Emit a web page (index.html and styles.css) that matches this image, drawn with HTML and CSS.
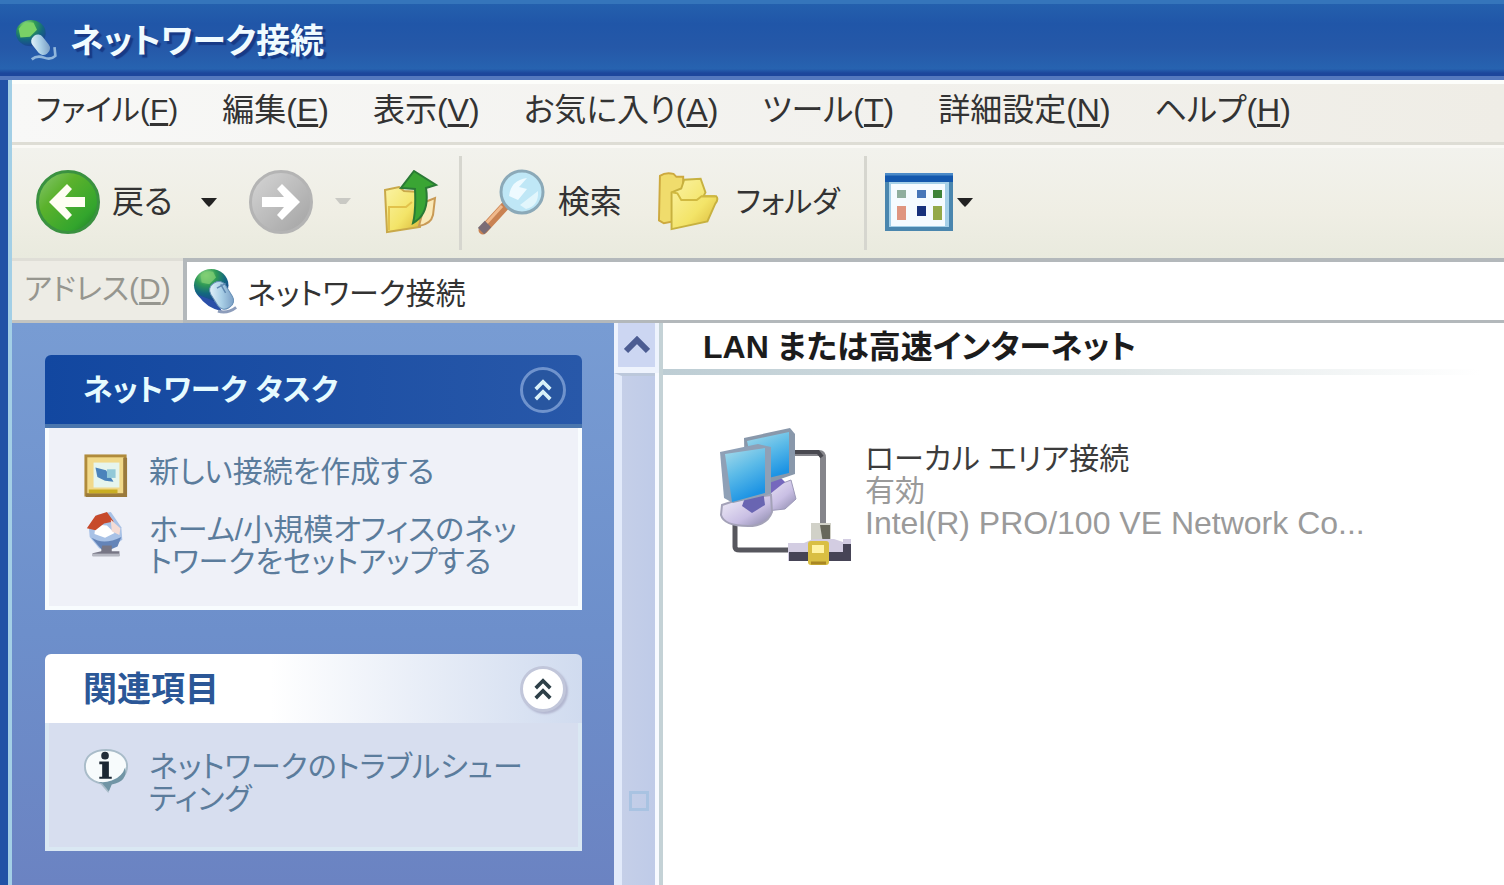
FILE: index.html
```html
<!DOCTYPE html>
<html lang="ja">
<head>
<meta charset="utf-8">
<meta name="viewport" content="width=device-width, initial-scale=1">
<title>ネットワーク接続</title>
<link rel="stylesheet" href="styles.css">
</head>
<body>
<svg class="defs" aria-hidden="true">
  <defs>
    <radialGradient id="globe" cx="35%" cy="20%" r="85%">
      <stop offset="0" stop-color="#9be08a"/><stop offset=".35" stop-color="#2f9a55"/><stop offset=".65" stop-color="#14687f"/><stop offset="1" stop-color="#1c3f96"/>
    </radialGradient>
    <linearGradient id="mouse" x1="0" y1="0" x2="1" y2="1">
      <stop offset="0" stop-color="#eef8fc"/><stop offset=".5" stop-color="#a9cfe6"/><stop offset="1" stop-color="#6f93bd"/>
    </linearGradient>
    <linearGradient id="green" x1="0" y1="0" x2="1" y2="1">
      <stop offset="0" stop-color="#8bc878"/><stop offset=".35" stop-color="#5bb22c"/><stop offset=".75" stop-color="#33a52d"/><stop offset="1" stop-color="#1d7428"/>
    </linearGradient>
    <linearGradient id="grey" x1="0" y1="0" x2="1" y2="1">
      <stop offset="0" stop-color="#d6d6d6"/><stop offset="1" stop-color="#a2a2a2"/>
    </linearGradient>
    <linearGradient id="folder" x1="0" y1="0" x2="1" y2="1">
      <stop offset="0" stop-color="#fbf3a4"/><stop offset=".6" stop-color="#f3e468"/><stop offset="1" stop-color="#d9b738"/>
    </linearGradient>
    <linearGradient id="screen" x1="0" y1="0" x2=".4" y2="1">
      <stop offset="0" stop-color="#a9dcea"/><stop offset=".5" stop-color="#5cbbe8"/><stop offset="1" stop-color="#1c93e4"/>
    </linearGradient>
    <linearGradient id="base" x1="0" y1="0" x2="1" y2="1">
      <stop offset="0" stop-color="#f4f2fa"/><stop offset=".6" stop-color="#c9bfe4"/><stop offset="1" stop-color="#8583a5"/>
    </linearGradient>
    <symbol id="net" viewBox="0 0 48 48">
      <ellipse cx="19" cy="18" rx="18" ry="17" fill="url(#globe)"/>
      <path d="M8 7q6-5 13-3l3 6-7 7-8-2z" fill="#7ccc70" opacity=".8"/>
      <path d="M5 28q9 14 25 17l-4-9z" fill="#2a4fa8"/>
      <rect x="21" y="14" width="18" height="30" rx="8" transform="rotate(-32 29 29)" fill="url(#mouse)" stroke="#668fb6"/>
      <path d="M25 21l9-5M29 17l5 9" stroke="#5f88b0" stroke-width="1.5" fill="none"/>
      <path d="M26 45q10 3 19-4" stroke="#8d9dbb" stroke-width="3" fill="none"/>
    </symbol>
    <symbol id="chevrons" viewBox="0 0 22 26">
      <path d="M3 12l8-8 8 8M3 23l8-8 8 8" fill="none" stroke="currentColor" stroke-width="4"/>
    </symbol>
  </defs>
</svg>
<div class="window">
  <header class="titlebar">
    <svg class="title-icon" viewBox="0 0 48 48" aria-hidden="true">
      <ellipse cx="17" cy="15" rx="17" ry="15" fill="url(#globe)"/>
      <path d="M3 10q7-9 17-7l4 8-8 8-11 1z" fill="#79d266"/>
      <rect x="21" y="16" width="15" height="25" rx="7" transform="rotate(-38 28 29)" fill="url(#mouse)"/>
      <path d="M18 45q6-5 14-2t13-2l-1-10" stroke="#91b7dc" stroke-width="3" fill="none"/>
    </svg>
    <h1 class="title">ネットワーク接続</h1>
  </header>
  <div class="frame">
    <nav class="menubar" aria-label="メニュー">
      <button type="button">ファイル(<u>F</u>)</button>
      <button type="button">編集(<u>E</u>)</button>
      <button type="button">表示(<u>V</u>)</button>
      <button type="button">お気に入り(<u>A</u>)</button>
      <button type="button">ツール(<u>T</u>)</button>
      <button type="button">詳細設定(<u>N</u>)</button>
      <button type="button">ヘルプ(<u>H</u>)</button>
    </nav>
    <div class="toolbar" role="toolbar" aria-label="ツールバー">
      <div class="group group-nav">
        <button type="button" class="tool tool-back">
          <svg class="icon-round" viewBox="0 0 64 64" aria-hidden="true">
            <circle cx="32" cy="32" r="30.5" fill="url(#green)" stroke="#3a9140" stroke-width="3"/>
            <path d="M13 32l18-18 5 5-7 8h20v10H29l7 8-5 5z" fill="#fffef2"/>
          </svg>
          <span>戻る</span>
          <svg class="caret" viewBox="0 0 16 9" aria-hidden="true"><path d="M0 0h16l-5 6-3 3-3-3z" fill="#222"/></svg>
        </button>
        <button type="button" class="tool tool-forward" aria-label="進む" disabled>
          <svg class="icon-round" viewBox="0 0 64 64" aria-hidden="true">
            <circle cx="32" cy="32" r="30.5" fill="url(#grey)" stroke="#b4b4b4" stroke-width="3"/>
            <path d="M51 32L33 50l-5-5 7-8H13V27h22l-7-8 5-5z" fill="#fff"/>
          </svg>
          <svg class="caret" viewBox="0 0 16 9" aria-hidden="true"><path d="M0 0h16l-5 6h-6z" fill="#c9c9c4"/></svg>
        </button>
        <button type="button" class="tool" aria-label="上へ">
          <svg class="icon-up" viewBox="0 0 56 64" aria-hidden="true">
            <path d="M2 20l14-3 5 4 16 1v35l-33 5z" fill="url(#folder)" stroke="#c9a94a" stroke-width="2"/>
            <path d="M36 56l6-24 10-4-2 17q-2 9-14 11z" fill="#fae9b8" stroke="#c99a55" stroke-width="2"/>
            <path d="M6 60V37h17l6-5" fill="none" stroke="#e2c24b" stroke-width="2"/>
            <path d="M31 1l22 14-10 3q4 26-13 35 3-12 2-34l-14-1z" fill="#3aa534" stroke="#2a7a35" stroke-width="2"/>
          </svg>
        </button>
      </div>
      <div class="group group-find">
        <button type="button" class="tool tool-find">
          <svg class="icon-find" viewBox="0 0 68 68" aria-hidden="true">
            <path d="M5 62l23-25" stroke="#c98252" stroke-width="9" stroke-linecap="round"/>
            <path d="M4 60l20-22" stroke="#f0b98c" stroke-width="3"/>
            <path d="M3 63l7-7" stroke="#7a6c75" stroke-width="9"/>
            <circle cx="44" cy="24" r="21" fill="#bfe7f6" stroke="#8ba9b8" stroke-width="3"/>
            <path d="M31 28q2-16 18-18l-8 9 8 2-9 11z" fill="#eefaff"/>
            <path d="M42 37l18-14q1 15-12 18z" fill="#e2f6fc"/>
          </svg>
          <span>検索</span>
        </button>
        <button type="button" class="tool tool-folders">
          <svg class="icon-folders" viewBox="0 0 64 64" aria-hidden="true">
            <path d="M2 5q6-4 14-2l3 3h7v44l-20 4-5-3z" fill="#f0dc6c" stroke="#cda93f" stroke-width="2"/>
            <path d="M14 60V22l10-4 3-9 17-1 5 14-2 4h13q3 3-1 8l-8 18z" fill="url(#folder)" stroke="#c7b13f" stroke-width="2"/>
            <path d="M14 22l6 1 4 7h16l5-4h14" fill="none" stroke="#d0b940" stroke-width="2"/>
          </svg>
          <span>フォルダ</span>
        </button>
      </div>
      <div class="group group-view">
        <button type="button" class="tool tool-view" aria-label="表示">
          <svg class="icon-view" viewBox="0 0 68 58" aria-hidden="true">
            <rect x="2" y="2" width="64" height="54" fill="#a5d0e8" stroke="#4a86ae" stroke-width="4"/>
            <rect x="6" y="11" width="54" height="42" fill="#f5fbff"/>
            <rect width="68" height="9" fill="#1458ad"/>
            <path d="M0 1h68" stroke="#4b8ac8" stroke-width="3"/>
            <rect x="12" y="17" width="9" height="8" fill="#8fae9e"/><rect x="32" y="17" width="9" height="8" fill="#4776b8"/><rect x="48" y="17" width="9" height="8" fill="#3e8339"/>
            <rect x="12" y="33" width="9" height="14" fill="#df9580"/><rect x="32" y="33" width="9" height="10" fill="#17317c"/><rect x="48" y="33" width="9" height="14" fill="#93a949"/>
          </svg>
          <svg class="caret" viewBox="0 0 16 9" aria-hidden="true"><path d="M0 0h16l-5 6-3 3-3-3z" fill="#222"/></svg>
        </button>
      </div>
    </div>
    <div class="addressbar">
      <label for="address">アドレス(<u>D</u>)</label>
      <div class="address-field">
        <svg class="icon-net" aria-hidden="true"><use href="#net"/></svg>
        <input id="address" type="text" value="ネットワーク接続">
      </div>
    </div>
    <div class="content">
      <aside class="sidebar">
        <section class="panel panel-primary">
          <header class="panel-head">
            <h2>ネットワーク タスク</h2>
            <button type="button" class="collapse" aria-label="ネットワーク タスクを閉じる"><svg aria-hidden="true"><use href="#chevrons"/></svg></button>
          </header>
          <ul class="panel-body">
            <li><a href="#new">
              <svg class="task-icon" viewBox="0 0 48 48" aria-hidden="true">
                <rect x="3" y="3" width="41" height="41" fill="#f1d98a" stroke="#b08b3c" stroke-width="3"/>
                <path d="M3 44h41V5" fill="none" stroke="#9a7a3c" stroke-width="4"/>
                <rect x="11" y="10" width="27" height="26" fill="#e6f5ee"/>
                <path d="M13 15l11 3 8 12-9-1-8-4z" fill="#4b83bb"/><rect x="25" y="17" width="9" height="9" fill="#92c9d8"/>
                <path d="M6 40h30" stroke="#c9ae23" stroke-width="4"/>
              </svg>
              <span>新しい接続を作成する</span></a></li>
            <li><a href="#setup">
              <svg class="task-icon" viewBox="0 0 48 48" aria-hidden="true">
                <path d="M6 16L15 4l14-3 11 16 1 13-13 9H17L7 27z" fill="#a9c2e6"/>
                <path d="M13 14l12 1 8 8-10 5-11-4z" fill="#fff"/>
                <path d="M4 18L13 5 25 1l7 10-10 2-9 7z" fill="#c74a2b"/>
                <path d="M29 9l10 9-1 7-8-4z" fill="#f4dcd5"/>
                <path d="M9 28q13 8 31-1l-4 10-9 4h-7z" fill="#6484b8"/>
                <path d="M20 36h10v6h8v5H10v-3l9-2z" fill="#777685"/><path d="M10 46h28" stroke="#b5b7c1" stroke-width="3"/>
              </svg>
              <span>ホーム/小規模オフィスのネッ<br>トワークをセットアップする</span></a></li>
          </ul>
        </section>
        <section class="panel panel-secondary">
          <header class="panel-head">
            <h2>関連項目</h2>
            <button type="button" class="collapse" aria-label="関連項目を閉じる"><svg aria-hidden="true"><use href="#chevrons"/></svg></button>
          </header>
          <ul class="panel-body">
            <li><a href="#trouble">
              <svg class="task-icon" viewBox="0 0 48 48" aria-hidden="true">
                <path d="M24 2C10 2 2 9 2 19q0 14 17 18l7 8 3-9q17-4 17-17C46 9 37 2 24 2z" fill="#f7fbfc" stroke="#a9bcc9" stroke-width="2"/>
                <path d="M10 33q9 5 20 1 11-4 14-14 3 15-14 18l-3 7-7-8z" fill="#7195a5"/>
                <circle cx="23" cy="8" r="4" fill="#222d38"/><path d="M17 14h10v16h3v2H17v-2h3V17h-3z" fill="#1b2733"/>
              </svg>
              <span>ネットワークのトラブルシュー<br>ティング</span></a></li>
          </ul>
        </section>
      </aside>
      <div class="scrollbar">
        <button type="button" class="scroll-up" aria-label="上へスクロール"><svg viewBox="0 0 26 18" aria-hidden="true"><path d="M2 15L13 4l11 11" fill="none" stroke="#4c5c92" stroke-width="6"/></svg></button>
        <div class="thumb"><div class="grip"></div></div>
      </div>
      <main class="main">
        <h2 class="category">LAN または高速インターネット</h2>
        <div class="connection">
          <svg class="connection-icon" viewBox="0 0 138 140" aria-hidden="true">
            <path d="M78 26h26q4 0 4 5v68" fill="none" stroke="#85858b" stroke-width="6"/>
            <path d="M78 25h25l4 5" fill="none" stroke="#494950" stroke-width="4"/>
            <path d="M20 96v24q0 3 5 3h48" fill="none" stroke="#57575e" stroke-width="5"/>
            <path d="M52 62l24-9 5 19-11 10-28 3z" fill="url(#base)" stroke="#9c99b8" stroke-width="1"/>
            <path d="M45 53l16-7 9 9-15 12z" fill="#7568bd"/>
            <path d="M29 11l46-10 5 6v40l-29 10-21-4z" fill="#8998ab"/>
            <path d="M32 14l42-9v41l-33 8z" fill="url(#screen)"/>
            <path d="M7 78l18-6 31-4 1 17q-5 14-24 14-24 0-27-11z" fill="url(#base)" stroke="#a4a2b8" stroke-width="2"/>
            <path d="M31 68l17-5 2 15-13 8-10-7z" fill="#6965b2"/>
            <path d="M5 25l38-8 13 3v47l-38 9-9-5z" fill="#8fa0b6"/>
            <path d="M10 27l40-6v45l-33 9z" fill="url(#screen)"/>
            <rect x="96" y="96" width="20" height="21" fill="#d1d1c8"/><path d="M105 98h10v18h-7z" fill="#67675b"/>
            <path d="M73 116h16l9-4h21l9 3v-3h8v22H73z" fill="#d3cde2"/>
            <path d="M74 125h20v9H74zM114 125h14v-8h8v17h-22z" fill="#464456"/>
            <rect x="93" y="114" width="21" height="24" rx="3" fill="#d9bf43"/><path d="M97 118h12v8H97z" fill="#fff3a2"/><path d="M96 136h15" stroke="#a98724" stroke-width="3"/>
          </svg>
          <div class="connection-text">
            <p class="name">ローカル エリア接続</p>
            <p>有効</p>
            <p class="device">Intel(R) PRO/100 VE Network Co...</p>
          </div>
        </div>
      </main>
    </div>
  </div>
</div>
</body>
</html>
```
FILE: styles.css
```css
* { box-sizing: border-box; }

body {
  margin: 0;
  font-family: "Liberation Sans", "Noto Sans CJK JP", sans-serif;
  font-size: 30px;
  line-height: 32px;
  font-feature-settings: "palt";
  color: #333;
}

h1, h2, p, ul { margin: 0; padding: 0; }
ul { list-style: none; }
svg { display: block; flex: none; }

button, input {
  font: inherit;
  font-feature-settings: inherit;
  color: inherit;
  margin: 0;
  padding: 0;
  border: 0;
  background: none;
  white-space: nowrap;
}

u {
  text-decoration-thickness: 3px;
  text-underline-offset: 3px;
}

.defs { position: absolute; width: 0; height: 0; }

.window {
  display: flex;
  flex-direction: column;
  min-height: 100vh;
  background: #2152a6;
}

.titlebar {
  display: flex;
  align-items: center;
  gap: 12px;
  height: 80px;
  padding: 2px 16px 0;
  border-top: 4px solid #3575bb;
  border-bottom: 4px solid #5478be;
  background: linear-gradient(#2460ad 0, #2056a8 28%, #2558a8 60%, #2763b0 90%, #1c469c 96%);
}
.title-icon { width: 42px; height: 46px; }
.title {
  font-size: 34px;
  font-weight: 700;
  color: #f0fbff;
  text-shadow: 3px 3px 1px #173a86;
}

.frame {
  flex: 1;
  display: flex;
  flex-direction: column;
  margin-left: 8px;
  border-left: 4px solid #a3cfe6;
}

.menubar {
  display: flex;
  gap: 44px;
  height: 65px;
  padding: 0 24px 6px;
  align-items: center;
  font-size: 32px;
  border-top: 4px solid #fdfefb;
  border-bottom: 3px solid #deddd5;
  background: linear-gradient(90deg, #f8f8f7, #f2f1ed 60%, #efede6);
}
.menubar button:first-child { font-size: 30px; }

.toolbar {
  display: flex;
  height: 113px;
  padding: 8px 0 8px 24px;
  border-top: 3px solid #faf9f5;
  background: linear-gradient(#f2f2ed, #efeee4 60%, #e9eade);
}
.group { display: flex; align-items: center; }
.group + .group { border-left: 3px solid #d6d6cf; }
.group-nav { gap: 32px; padding-right: 20px; }
.group-find { gap: 36px; padding: 0 24px 0 16px; }
.group-view { padding-left: 18px; }
.tool { display: flex; align-items: center; gap: 12px; padding-bottom: 2px; }
.tool-back, .tool-find { font-size: 32px; }
.tool-forward { gap: 22px; }
.tool-back .caret { margin-left: 16px; }
.tool-folders { gap: 16px; }
.tool-view { gap: 4px; }
.caret { width: 16px; height: 9px; }
.icon-round { width: 64px; height: 64px; }
.icon-up { width: 56px; height: 64px; }
.icon-find { width: 68px; height: 68px; }
.icon-folders { width: 62px; height: 62px; }
.icon-view { width: 68px; height: 58px; }

.addressbar {
  display: flex;
  height: 65px;
  background: #edece5;
}
.addressbar label {
  display: flex;
  align-items: center;
  width: 171px;
  padding-left: 12px;
  padding-bottom: 4px;
  color: #96968f;
  white-space: nowrap;
  border-top: 3px solid #dfded7;
  border-bottom: 3px solid #c3c4c0;
}
.address-field {
  flex: 1;
  display: flex;
  align-items: center;
  gap: 8px;
  padding-left: 6px;
  border: solid #b3b8bb;
  border-width: 4px 0 3px 4px;
  background: #fff;
}
.icon-net { width: 46px; height: 48px; }
.address-field input { flex: 1; min-width: 0; height: 48px; outline: 0; }

.content { flex: 1; display: flex; }

.sidebar {
  width: 602px;
  padding: 32px 32px 32px 33px;
  background: linear-gradient(#789cd3, #6d8fcb 55%, #6b83c2);
}
.panel { overflow: hidden; border-radius: 6px 6px 0 0; }
.panel + .panel { margin-top: 44px; }
.panel-head {
  display: flex;
  align-items: center;
  justify-content: space-between;
  padding: 0 16px 0 38px;
}
.panel-head h2 { font-size: 30px; line-height: 32px; font-weight: 700; }
.panel-primary .panel-head { height: 73px; background: linear-gradient(90deg, #1247a0, #2858a9); border-bottom: 4px solid #4a76ae; color: #e6fbff; }
.panel-primary .panel-body { background: #eff1f8; padding-bottom: 28px; }
.panel-secondary .panel-head { height: 69px; background: linear-gradient(90deg, #fff 42%, #d0dbef); color: #2b5797; }
.panel-secondary .panel-head h2 { font-size: 34px; }
.panel-secondary .panel-body { background: #d7deef; padding-bottom: 32px; }

.collapse {
  display: flex;
  align-items: center;
  justify-content: center;
  width: 46px;
  height: 46px;
  border-radius: 50%;
}
.collapse svg { width: 20px; height: 24px; }
.panel-primary .collapse { border: 3px solid #6f93cd; color: #d8f0f8; background: #2856a0; }
.panel-secondary .collapse { border: 3px solid #c1c6da; color: #2e4048; background: #fff; box-shadow: 2px 2px 2px #b3b7d0; }

.panel-body {
  display: flex;
  flex-direction: column;
  gap: 10px;
  padding: 24px 16px 24px 34px;
  border: solid #f8fcfe;
  border-width: 0 4px 4px;
}
.panel-secondary .panel-body { border-color: #dae8f3; }
.panel-body a {
  display: flex;
  gap: 20px;
  color: #5b7c9c;
  text-decoration: none;
  white-space: nowrap;
}
.task-icon { width: 46px; height: 48px; }
.panel-body span { padding-top: 4px; }

.scrollbar {
  display: flex;
  flex-direction: column;
  width: 49px;
  border-right: 4px solid #c4d2d6;
  background: #f7faff;
}
.scroll-up {
  display: flex;
  align-items: center;
  justify-content: center;
  height: 50px;
  border: solid #eef3fd;
  border-width: 0 4px 6px;
  background: #ccd6f2;
}
.scroll-up svg { width: 26px; height: 18px; }
.thumb {
  flex: 1;
  display: flex;
  justify-content: center;
  margin-right: 4px;
  border: solid #e2eafa;
  border-width: 3px 0 0 8px;
  border-top-color: #bcc8db;
  background: linear-gradient(90deg, #c5cfe8, #bfcbe8);
}
.grip {
  align-self: flex-end;
  width: 20px;
  height: 20px;
  margin-bottom: 74px;
  border: 3px solid #a9c3e2;
}

.main { flex: 1; min-width: 0; background: #fff; }
.category {
  padding: 8px 0 6px 40px;
  font-size: 32px;
  line-height: 32px;
  font-weight: 700;
  color: #1c1c1c;
  border-bottom: 6px solid;
  border-image: linear-gradient(90deg, #bdcdd4, #dfe6e7 55%, #fff 97%) 1;
}
.connection { display: flex; padding: 52px 16px 0 52px; }
.connection-icon { width: 138px; height: 140px; }
.connection-text { padding: 16px 0 0 12px; color: #9a9a9a; white-space: nowrap; }
.name { color: #3c3c3c; }
.device { font-size: 32px; }
```
